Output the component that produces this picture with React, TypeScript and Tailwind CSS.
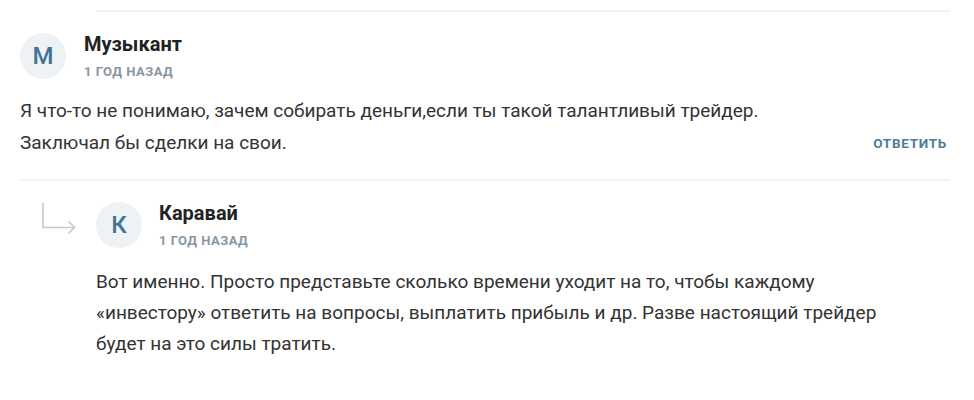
import React from "react";

const font = { fontFamily: "Roboto, 'Noto Sans', sans-serif" };

function Avatar({ letter }: { letter: string }) {
  return (
    <div className="flex h-[46px] w-[46px] shrink-0 items-center justify-center rounded-full bg-[#eef2f5] text-[24px] font-medium text-[#3f7594]">
      {letter}
    </div>
  );
}

function ReplyArrow() {
  return (
    <svg width="40" height="36" viewBox="0 0 40 36" fill="none" className="shrink-0">
      <path d="M1 0 V24.5 H33" stroke="#c3c9cf" strokeWidth="1.6" />
      <path d="M26.5 18.5 L32.5 24.5 L26.5 30.5" stroke="#c3c9cf" strokeWidth="1.6" />
    </svg>
  );
}

export default function App() {
  return (
    <div className="h-[400px] w-full bg-white pl-[20px] pr-[24px] text-[#333]" style={font}>
      <div className="ml-[76px] mt-[10px] h-[2px] bg-[#f3f3f3]" />
      <div className="mt-[21px] flex items-start">
        <Avatar letter="М" />
        <div className="ml-[18px]">
          <div className="text-[20px] font-bold leading-[22px] text-[#222]">Музыкант</div>
          <div className="mt-[10px] text-[13px] font-bold uppercase leading-[14px] tracking-[0.5px] text-[#8796a3]">
            1 год назад
          </div>
        </div>
      </div>
      <div className="mt-[16px] flex items-end justify-between">
        <p className="text-[19px] leading-[32px] text-[#333]">
          Я что-то не понимаю, зачем собирать деньги,если ты такой талантливый трейдер.
          <br />
          Заключал бы сделки на свои.
        </p>
        <button className="mb-[6px] mr-[3px] text-[13.5px] font-bold uppercase tracking-[0.7px] text-[#4c7c9a]">
          ответить
        </button>
      </div>
      <div className="mt-[20px] h-[2px] bg-[#f3f3f3]" />
      <div className="mt-[21px] flex items-start">
        <div className="w-[76px] pl-[22px] pt-[1px]">
          <ReplyArrow />
        </div>
        <div>
          <div className="flex items-start">
            <Avatar letter="К" />
            <div className="ml-[17px]">
              <div className="text-[20px] font-bold leading-[22px] text-[#222]">Каравай</div>
              <div className="mt-[10px] text-[13px] font-bold uppercase leading-[14px] tracking-[0.5px] text-[#8796a3]">
                1 год назад
              </div>
            </div>
          </div>
          <p className="mt-[18px] text-[19px] leading-[31px] text-[#333]">
            Вот именно. Просто представьте сколько времени уходит на то, чтобы каждому
            <br />
            «инвестору» ответить на вопросы, выплатить прибыль и др. Разве настоящий трейдер
            <br />
            будет на это силы тратить.
          </p>
        </div>
      </div>
    </div>
  );
}
